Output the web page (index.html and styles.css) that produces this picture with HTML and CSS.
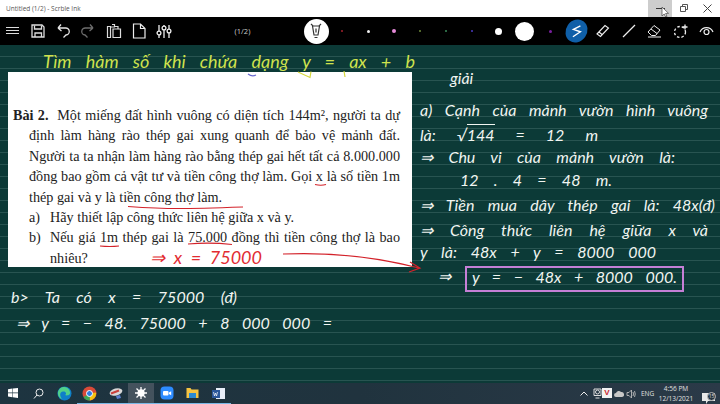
FILE: index.html
```html
<!DOCTYPE html>
<html lang="vi">
<head>
<meta charset="utf-8">
<title>Untitled (1/2) - Scrble Ink</title>
<link rel="stylesheet" href="styles.css">
</head>
<body>
<div class="app">
  <header class="titlebar">
    <span class="title">Untitled (1/2) - Scrble Ink</span>
    <div class="winbtns">
      <div class="winbtn hover">
        <svg width="24" height="17" viewBox="0 0 24 17"><path d="M8 8.500h9" stroke="#333" fill="none"/><path d="M14 7l0 9 2.200-2 1.500 3 1.300-.6-1.400-2.900 2.900-.2z" fill="#fff" stroke="#444" stroke-width=".7"/></svg>
      </div>
      <div class="winbtn">
        <svg width="24" height="17" viewBox="0 0 24 17"><path d="M8.500 6.500h5v5h-5zM10.500 6.500v-2h5v5h-2" stroke="#555" fill="none"/></svg>
      </div>
      <div class="winbtn">
        <svg width="24" height="17" viewBox="0 0 24 17"><path d="M7.500 4.500l8 8M15.500 4.500l-8 8" stroke="#444" fill="none"/></svg>
      </div>
    </div>
  </header>

  <nav class="toolbar">
    <div class="tb-left">
      <div class="slot"><svg width="16" height="10" viewBox="0 0 16 10"><path d="M1 1.500h13M1 4.500h13M1 7.500h13" stroke="#ddd" stroke-width="1.100"/></svg></div>
      <div class="slot"><svg width="16" height="16" viewBox="0 0 16 16" fill="none" stroke="#ddd" stroke-width="1.300"><path d="M2 2h10l2 2v10H2z"/><path d="M4.500 2.500v3.500h7v-3.500M5 14v-4h6.500v4"/></svg></div>
      <div class="slot"><svg width="16" height="16" viewBox="0 0 16 16" fill="none" stroke="#e6e6e6" stroke-width="1.300"><path d="M3 5h7.500a3.500 3.500 0 0 1 .5 7l-2.500 2.500M3 5l3-3.500M3 5l3.500 3"/></svg></div>
      <div class="slot"><svg width="16" height="16" viewBox="0 0 16 16" fill="none" stroke="#6d6d6d" stroke-width="1.300"><path d="M13 5h-7.500a3.500 3.500 0 0 0-.5 7l2.500 2.500M13 5l-3-3.500M13 5l-3.500 3"/></svg></div>
      <div class="slot"><svg width="16" height="16" viewBox="0 0 16 16" fill="none" stroke="#ddd" stroke-width="1.200"><path d="M1.500 3.500h3v11h-3zM6 1.500h2.500v2.500H4.500M8.500 3.500h3.500v2M7 6h7.500v8.500H7z"/></svg></div>
      <div class="slot"><svg width="14" height="16" viewBox="0 0 14 16" fill="none" stroke="#eee" stroke-width="1.200"><path d="M1.500 1h7l4.500 4.500v9.500h-11.500zM8.500 1v4.500H13"/></svg></div>
      <div class="slot"><svg width="16" height="15" viewBox="0 0 16 15" fill="none" stroke="#eee" stroke-width="1.300"><path d="M3 1v13M8 1v13M13 1v13"/><circle cx="3" cy="9" r="1.900" fill="#000"/><circle cx="8" cy="4" r="1.900" fill="#000"/><circle cx="13" cy="7" r="1.900" fill="#000"/></svg></div>
    </div>
    <div class="pager">(1/2)</div>
    <div class="tb-tools">
      <div class="slot"><span class="pen"><svg width="12" height="16" viewBox="0 0 12 16" fill="none" stroke="#333" stroke-width="1.200"><path d="M1 1l2 2h6l2-2M2.500 3l1.500 9h4l1.500-9M6 5.500v4M4.500 14.500h3"/></svg></span></div>
      <div class="slot"><i class="dot d1"></i></div>
      <div class="slot"><i class="dot d2"></i></div>
      <div class="slot"><i class="dot d3"></i></div>
      <div class="slot"><i class="dot d4"></i></div>
      <div class="slot"><i class="dot d5"></i></div>
      <div class="slot"><i class="dot d6"></i></div>
      <div class="slot"><i class="dot d7"></i></div>
      <div class="slot"><i class="dot d8"></i></div>
      <div class="slot"><i class="dot d9"></i></div>
      <div class="slot"><span class="stroke-btn"><svg width="12" height="14" viewBox="0 0 12 14" fill="none" stroke="#fff" stroke-width="1.400"><path d="M9.500 1.500L2.500 5l7 2.500-7.500 5"/></svg></span></div>
      <div class="slot"><svg width="14" height="14" viewBox="0 0 14 14" fill="none" stroke="#eee" stroke-width="1.100"><path d="M1 10l8-8.500 3.500 2.500-8 8.500z M3 8l3 2.500"/></svg></div>
      <div class="slot"><svg width="14" height="14" viewBox="0 0 14 14" fill="none" stroke="#eee" stroke-width="1.300"><path d="M1 13L13 1"/></svg></div>
      <div class="slot"><svg width="15" height="14" viewBox="0 0 15 14" fill="none" stroke="#eee" stroke-width="1"><path d="M1 8l6-6.500 6 4.500-4.500 5.500H4.500zM4 5l6 4.500M1 13h13"/></svg></div>
      <div class="slot"><svg width="15" height="15" viewBox="0 0 15 15" fill="none" stroke="#eee" stroke-width="1.300"><circle cx="7" cy="8" r="5.500" stroke-dasharray="2.500 2"/><path d="M12 .5v5M9.500 3h5"/></svg></div>
      <div class="slot"><svg width="15" height="12" viewBox="0 0 15 12" fill="none" stroke="#eee" stroke-width="1.200"><path d="M1 7a7 7 0 0 1 13 0"/><circle cx="7.500" cy="7" r="2.500"/></svg></div>
    </div>
  </nav>

  <main class="canvas">
    <p class="ink yellow n-title">Tìm hàm số khi chứa dạng y = ax + b</p>

    <section class="sheet">
      <div class="line first"><b>Bài 2.</b>&nbsp; Một miếng đất hình vuông có diện tích 144m², người ta dự</div>
      <div class="line indent">định làm hàng rào thép gai xung quanh để bảo vệ mảnh đất.</div>
      <div class="line indent">Người ta ta nhận làm hàng rào bằng thép gai hết tất cả 8.000.000</div>
      <div class="line indent">đồng bao gồm cả vật tư và tiền công thợ làm. Gọi x là số tiền 1m</div>
      <div class="line indent end">thép gai và y là tiền công thợ làm.</div>
      <div class="line item end"><span class="mark">a)</span>Hãy thiết lập công thức liên hệ giữa x và y.</div>
      <div class="line item"><span class="mark">b)</span><span class="fill">Nếu giá 1m thép gai là 75.000 đồng thì tiền công thợ là bao</span></div>
      <div class="line item-cont end">nhiêu?</div>
    </section>

    <p class="ink n-giai">giải</p>
    <p class="ink n-a">a) Cạnh của mảnh vườn hình vuông</p>
    <p class="ink n-la">là: √<span class="root">144</span> = 12 m</p>
    <p class="ink n-chu">⇒ Chu vi của mảnh vườn là:</p>
    <p class="ink n-12">12 . 4 = 48 m.</p>
    <p class="ink n-tien">⇒ Tiền mua dây thép gai là: 48x(đ)</p>
    <p class="ink n-cong">⇒ Công thức liên hệ giữa x và</p>
    <p class="ink n-yla">y là: 48x + y = 8000 000</p>
    <p class="ink n-arrow">⇒</p>
    <div class="box"><p class="ink n-box">y = − 48x + 8000 000.</p></div>
    <p class="ink n-b">b&gt; Ta có x = 75000 (đ)</p>
    <p class="ink n-y">⇒ y = − 48. 75000 + 8 000 000 =</p>
    <p class="ink red n-red">⇒ x = 75000</p>

    <svg class="marks" width="720" height="338" viewBox="0 45 720 338" fill="none" stroke="#d3222a" stroke-width="1.200">
      <path d="M315 184.500q6 1.500 11 0"/>
      <path d="M128 206.500q30 2 50 2t65-1.500"/>
      <path d="M100 246q10 1 19 0"/>
      <path d="M188 244q22-2 44 .5"/>
      <path d="M283 254q70-3 136 14M410 262l10 6-11 4"/>
      <path d="M248 74q4 3 8 1" stroke="#6a6ad0"/>
      <path d="M298 72l12 5.500 1-6M344 71l1 6" stroke="#d6d83a"/>
    </svg>
  </main>

  <footer class="taskbar">
    <div class="tasks">
      <div class="task"><svg width="10" height="10" viewBox="0 0 10 10" fill="#fff"><path d="M0 1.300l4.300-.7v4H0zM4.800.5L10 0v4.600H4.800zM0 5.200h4.300v4L0 8.600zM4.800 5.200H10V10l-5.200-.7z"/></svg></div>
      <div class="task"><svg width="11" height="11" viewBox="0 0 11 11" fill="none" stroke="#eee" stroke-width="1"><circle cx="6.500" cy="4.500" r="3.500"/><path d="M4 7l-3 3.500"/></svg></div>
      <div class="task"><svg width="15" height="15" viewBox="0 0 15 15"><circle cx="7.500" cy="7.500" r="7" fill="#0f7fc9"/><path d="M1 8a6 6 0 0 1 12-2c1 3-3 4-5 3 2-1 1-4-2-3.500S2 9 5 13C2.500 12.500 1 10 1 8z" fill="#4fd08a"/></svg></div>
      <div class="task run"><svg width="15" height="15" viewBox="0 0 15 15"><circle cx="7.500" cy="7.500" r="7" fill="#d94a38"/><path d="M7.500 7.500L1.500 11a7 7 0 0 0 6.500 3.500z" fill="#3aa757"/><path d="M7.500 7.500l6.500-1a7 7 0 0 1-6 8z" fill="#f4c20d"/><circle cx="7.500" cy="7.500" r="3" fill="#2f7de1" stroke="#fff"/></svg></div>
      <div class="task run"><svg width="14" height="12" viewBox="0 0 14 12"><ellipse cx="7" cy="5" rx="6.500" ry="3.500" fill="#d8d8d8" transform="rotate(-15 7 5)"/><path d="M2 6.500l8-3" stroke="#c9403a" stroke-width="2"/><path d="M7 9l4-1 1 3-4 1z" fill="#5a7fd0"/></svg></div>
      <div class="task run active"><svg width="14" height="14" viewBox="0 0 14 14" stroke="#fff" stroke-width="1.300"><path d="M7 1v12M1 7h12M2.500 2.500l9 9M11.500 2.500l-9 9"/><circle cx="7" cy="7" r="3" fill="#fff"/></svg></div>
      <div class="task run"><svg width="14" height="14" viewBox="0 0 14 14"><rect x="0.500" y="0.500" width="13" height="13" rx="4" fill="#2d8cff"/><rect x="3" y="5" width="5.500" height="4.500" rx="1" fill="#fff"/><path d="M9 6.500l2.200-1.300v4L9 8z" fill="#fff"/></svg></div>
      <div class="task run"><svg width="13" height="12" viewBox="0 0 13 12"><path d="M.5 1h4l1 1.500h7V11H.5z" fill="#f5c341"/><rect x="3" y="6" width="7" height="5" fill="#2a8ad4"/></svg></div>
      <div class="task run"><svg width="13" height="13" viewBox="0 0 13 13"><rect x="4" y="1" width="9" height="11" fill="#e8eef8"/><rect x="0" y="3" width="8" height="8" fill="#2b579a"/><path d="M1.500 5l1 4 1-3 1 3 1-4" stroke="#fff" stroke-width=".7" fill="none"/></svg></div>
    </div>
    <div class="tray">
      <svg class="t-chev" width="8" height="5" viewBox="0 0 8 5" fill="none" stroke="#eee"><path d="M.5 4.500L4 1l3.500 3.500"/></svg>
      <svg class="t-meet" width="9" height="11" viewBox="0 0 9 11" fill="none" stroke="#ddd"><circle cx="4.500" cy="4" r="2"/><path d="M1 1h7v6.500H1zM2.500 10h4"/></svg>
      <span class="t-v">V</span>
      <svg class="t-cloud" width="10" height="7" viewBox="0 0 10 7"><path d="M2 7a2 2 0 0 1 0-4 3 3 0 0 1 5-1 2.500 2.500 0 0 1 1 5z" fill="#c8c8c8"/></svg>
      <svg class="t-vol" width="11" height="10" viewBox="0 0 11 10" fill="none" stroke="#bbb" stroke-width=".9"><path d="M1 3.500h2L5.500 1v8L3 6.500H1zM7 3q1 2 0 4M8.500 2q1.500 3 0 6"/></svg>
      <span class="t-lang">ENG</span>
      <div class="t-clock"><span>4:56 PM</span><span>12/13/2021</span></div>
      <div class="t-note"><svg width="13" height="11" viewBox="0 0 13 11"><path d="M0 0h13v8H6l-2 3v-3H0z" fill="#e8e8e8"/></svg><span class="t-badge">15</span></div>
    </div>
  </footer>
</div>
</body>
</html>
```

FILE: styles.css
```css
* { box-sizing: border-box; }
html, body { margin: 0; padding: 0; }
body { width: 720px; height: 404px; overflow: hidden; font-family: "Open Sans", "Liberation Sans", sans-serif; }
p { margin: 0; }
.app { width: 720px; height: 404px; display: flex; flex-direction: column; }

.titlebar { height: 17px; background: #fff; display: flex; justify-content: space-between; align-items: center; padding-left: 6px; }
.title { font-size: 6.500px; color: #555; white-space: nowrap; }
.winbtns { display: flex; align-items: stretch; height: 17px; }
.winbtn { width: 24px; height: 17px; display: flex; }
.hover { background: #cdcdcd; }

.toolbar { height: 28px; background: #000; display: flex; align-items: center; }
.tb-left { width: 177px; display: flex; }
.slot { flex: 1; height: 28px; display: flex; align-items: center; justify-content: center; }
.pager { width: 126px; padding-left: 5px; text-align: center; color: #ccc; font-size: 7.500px; }
.tb-tools { flex: 1; display: flex; }
.pen { width: 25px; height: 25px; background: #fff; border-radius: 50%; display: flex; align-items: center; justify-content: center; }
.dot { display: block; border-radius: 50%; }
.d1 { width: 2px; height: 2px; background: #a3202c; }
.d2 { width: 3px; height: 3px; background: #f0f0f0; }
.d3 { width: 4px; height: 4px; background: #e58ad8; }
.d4 { width: 2px; height: 2px; background: #6e8a3a; }
.d5 { width: 2px; height: 2px; background: #3a8a5a; }
.d6 { width: 2px; height: 2px; background: #4a3ac0; }
.d7 { width: 7px; height: 7px; background: #fff; }
.d8 { width: 19px; height: 19px; background: #fff; }
.d9 { width: 3px; height: 3px; background: #7a1fa0; }
.stroke-btn { width: 21px; height: 24px; background: #0f5fa8; border-radius: 50%; transform: rotate(35deg); display: flex; align-items: center; justify-content: center; }
.stroke-btn svg { transform: rotate(-35deg); }

.canvas { position: relative; flex: 1; overflow: hidden; background-color: #0c3a37; background-image: repeating-linear-gradient(to bottom, transparent 0, transparent 11px, #285451 11px, #285451 12px); }
.sheet { position: absolute; left: 8px; top: 27px; width: 404px; height: 195px; background: #fff; padding: 33px 12px 0 5px; font-family: "Liberation Serif", "Noto Sans", serif; font-size: 14.200px; color: #222; line-height: 20.400px; }
.line { white-space: nowrap; text-align: justify; text-align-last: justify; }
.line.end { text-align-last: left; }
.indent { padding-left: 16px; }
.item { padding-left: 16px; display: flex; }
.item-cont { padding-left: 37px; }
.mark { width: 21px; flex: none; }
.fill { flex: 1; text-align-last: justify; }

.ink { position: absolute; white-space: nowrap; color: #f1f5f1; font-family: "Lato", "Open Sans", sans-serif; font-style: italic; font-weight: 400; font-size: 16px; line-height: 18px; text-align-last: justify; }
.yellow { color: #cfe24e; }
.red { color: #e22c32; }
.n-title { left: 43px; top: 7px; width: 372px; font-size: 18px; }
.n-giai { left: 450px; top: 24px; }
.n-a { left: 420px; top: 56px; width: 288px; }
.n-la { left: 420px; top: 81px; width: 178px; }
.root { border-top: 1px solid #f1f5f1; }
.n-chu { left: 420px; top: 103px; width: 255px; }
.n-12 { left: 460px; top: 126px; width: 152px; }
.n-tien { left: 420px; top: 151px; width: 295px; }
.n-cong { left: 420px; top: 176px; width: 288px; }
.n-yla { left: 420px; top: 198px; width: 236px; }
.n-arrow { left: 438px; top: 222px; }
.box { position: absolute; left: 465px; top: 221px; width: 219px; height: 26px; border: 2px solid #c57fd6; }
.n-box { left: 5px; top: 0; width: 205px; }
.n-b { left: 11px; top: 243px; width: 226px; }
.n-y { left: 16px; top: 269px; width: 316px; }
.n-red { left: 150px; top: 203px; width: 112px; font-size: 18px; }
.marks { position: absolute; left: 0; top: 0; }

.taskbar { height: 21px; background: linear-gradient(to right, #1d3440, #20333e 50%, #2b3a48); display: flex; justify-content: space-between; align-items: stretch; }
.tasks { display: flex; width: 231px; }
.task { flex: 1; display: flex; align-items: center; justify-content: center; border-bottom: 1px solid transparent; }
.run { border-bottom-color: #7ab8e6; }
.active { background: #44525d; }
.tray { position: relative; width: 145px; color: #e0e0e0; }
.tray > * { position: absolute; }
.t-chev { left: 5px; top: 8px; }
.t-meet { left: 18px; top: 5px; }
.t-v { left: 27px; top: 5px; width: 10px; height: 10px; background: #f2f2f2; color: #c9252c; font: bold 8px/10px "Liberation Sans", sans-serif; text-align: center; }
.t-cloud { left: 39px; top: 7px; }
.t-vol { left: 51px; top: 6px; }
.t-lang { left: 66px; top: 5px; font-size: 6.500px; line-height: 11px; }
.t-clock { left: 82px; top: 1px; width: 38px; display: flex; flex-direction: column; align-items: center; font-size: 6.500px; line-height: 10px; white-space: nowrap; }
.t-note { left: 127px; top: 4px; width: 14px; height: 14px; }
.t-badge { position: absolute; left: 5px; top: 5px; width: 9px; height: 9px; border-radius: 50%; background: #27343f; border: 1px solid #bbb; font-size: 5px; line-height: 7px; text-align: center; }
```
